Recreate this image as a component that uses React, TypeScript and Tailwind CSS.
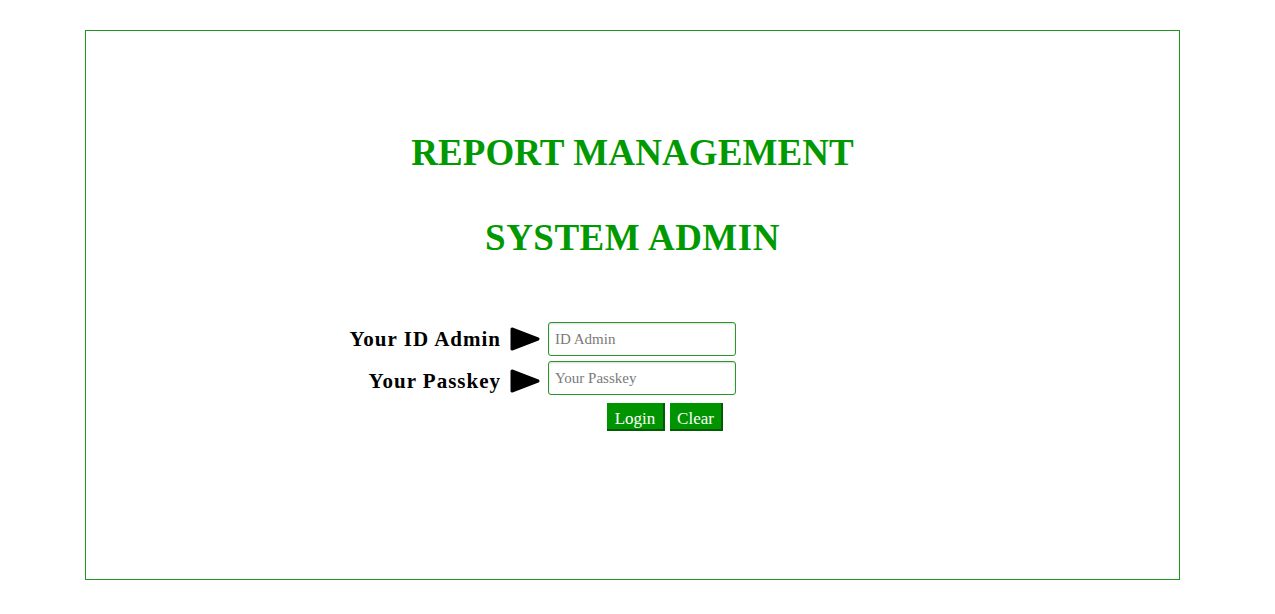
import React from 'react'

const serif = { fontFamily: '"Liberation Serif", "DejaVu Serif", serif' }

function Arrow() {
  return (
    <svg width="30" height="24" viewBox="0 0 30 24" className="shrink-0">
      <path d="M2 2 L28 12 L2 22 Z" fill="#000" stroke="#000" strokeWidth="3" strokeLinejoin="round" />
    </svg>
  )
}

const labels = ['Your ID Admin', 'Your Passkey']

export default function App() {
  return (
    <div className="min-h-[614px] bg-white pt-[30px] pl-[85px]" style={serif}>
      <div className="w-[1095px] h-[550px] border border-[#1f961f] flex flex-col">
        <h1 className="mt-[100px] text-center text-[37px] leading-[43px] font-bold text-[#009900] tracking-[0.1px]">
          REPORT MANAGEMENT
        </h1>
        <h1 className="mt-[42px] text-center text-[37px] leading-[43px] font-bold text-[#009900] tracking-[0.5px]">
          SYSTEM ADMIN
        </h1>

        <div className="mt-[59px] ml-[214px] flex">
          <div className="flex flex-col w-[240px]">
            {labels.map((l) => (
              <div key={l} className="h-[42px] flex items-center justify-end">
                <span className="text-[21px] font-bold tracking-[1px] text-black mr-[9px] pt-[2px]">{l}</span>
                <Arrow />
              </div>
            ))}
          </div>
          <div className="ml-[8px] pt-[4px] flex flex-col">
            <input
              placeholder="ID Admin"
              className="w-[188px] h-[34px] border border-[#2a962a] rounded-[3px] px-[6px] text-[15px] text-black placeholder:text-[#7a7a7a] shadow-[inset_0_1px_2px_rgba(0,0,0,0.15)] outline-none"
              style={serif}
            />
            <input
              placeholder="Your Passkey"
              className="mt-[5px] w-[188px] h-[34px] border border-[#2a962a] rounded-[3px] px-[6px] text-[15px] text-black placeholder:text-[#7a7a7a] shadow-[inset_0_1px_2px_rgba(0,0,0,0.15)] outline-none"
              style={serif}
            />
            <div className="mt-[8px] ml-[59px] flex gap-[5px]">
              <button className="w-[58px] h-[28px] pt-[3px] bg-[#009400] text-white text-[17px] border-r-2 border-b-2 border-[#055a05]">
                Login
              </button>
              <button className="w-[53px] h-[28px] pt-[3px] bg-[#009400] text-white text-[17px] border-r-2 border-b-2 border-[#055a05]">
                Clear
              </button>
            </div>
          </div>
        </div>
      </div>
    </div>
  )
}
